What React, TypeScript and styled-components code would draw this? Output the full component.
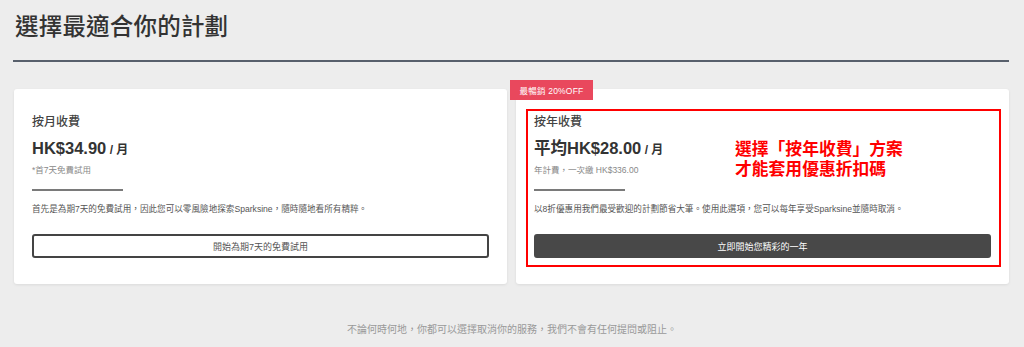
import React from 'react';
import styled, {createGlobalStyle} from "styled-components";

const GlobalStyle = createGlobalStyle`
    body {
        margin: 0;
        background: #ededed;
        font-family: "Liberation Sans", "Noto Sans CJK TC", sans-serif;
        color: #333;
    }
`

type Plan = {
    key: string
    name: string
    prefix?: string
    price: string
    note: string
    desc: string
    action: string
    featured?: boolean
}

const plans: Plan[] = [
    {
        key: "month",
        name: "按月收費",
        price: "HK$34.90",
        note: "*首7天免費試用",
        desc: "首先是為期7天的免費試用，因此您可以零風險地探索Sparksine，隨時隨地看所有精粹。",
        action: "開始為期7天的免費試用",
    },
    {
        key: "year",
        name: "按年收費",
        prefix: "平均",
        price: "HK$28.00",
        note: "年計費，一次繳 HK$336.00",
        desc: "以8折優惠用我們最受歡迎的計劃節省大筆。使用此選項，您可以每年享受Sparksine並隨時取消。",
        action: "立即開始您精彩的一年",
        featured: true,
    },
]

export default function App() {
    return (
        <Page>
            <GlobalStyle/>
            <Header>
                <Title>選擇最適合你的計劃</Title>
            </Header>
            <Cards>
                {plans.map(p => (
                    <Card key={p.key}>
                        {p.featured && <Badge>最暢銷 20%OFF</Badge>}
                        {p.featured && <Highlight/>}
                        {p.featured && (
                            <Callout>
                                <CalloutLine>選擇「按年收費」方案</CalloutLine>
                                <CalloutLine>才能套用優惠折扣碼</CalloutLine>
                            </Callout>
                        )}
                        <PlanName>{p.name}</PlanName>
                        <Price>
                            {p.prefix}{p.price}<Unit> / 月</Unit>
                        </Price>
                        <Note>{p.note}</Note>
                        <Divider/>
                        <Desc>{p.desc}</Desc>
                        <Action $dark={p.featured}>{p.action}</Action>
                    </Card>
                ))}
            </Cards>
            <Footer>不論何時何地，你都可以選擇取消你的服務，我們不會有任何提問或阻止。</Footer>
        </Page>
    );
}

const Page = styled.div`
    width: 1024px;
    height: 347px;
    overflow: hidden;
`

const Header = styled.div`
    margin: 0 15px 0 13px;
    padding: 9px 2px 19px;
    border-bottom: 2px solid #58606c;
`

const Title = styled.h1`
    margin: 0;
    font-family: "Noto Sans CJK TC", sans-serif;
    font-size: 23.5px;
    line-height: 32px;
    font-weight: 500;
    color: #333;
    letter-spacing: 0.2px;
`

const Cards = styled.div`
    display: grid;
    grid-template-columns: 493px 493px;
    gap: 9px;
    margin: 27px 0 0 14px;
`

const Card = styled.div`
    position: relative;
    background: #fff;
    border-radius: 3px;
    box-shadow: 0 1px 3px rgba(0, 0, 0, 0.08);
    height: 195px;
    box-sizing: border-box;
    padding: 25px 18px 0;
    display: flex;
    flex-direction: column;
`

const Badge = styled.div`
    position: absolute;
    left: -6px;
    top: -9px;
    width: 83px;
    height: 20px;
    display: flex;
    align-items: center;
    justify-content: center;
    background: #e9485d;
    color: #fff;
    font-size: 8.5px;
    letter-spacing: 0.2px;
`

const Highlight = styled.div`
    position: absolute;
    left: 10px;
    top: 20px;
    right: 8px;
    bottom: 17px;
    border: 2px solid #ff0000;
    pointer-events: none;
`

const Callout = styled.div`
    position: absolute;
    left: 219px;
    top: 49px;
    color: #ff0000;
    font-family: "Noto Sans CJK TC", sans-serif;
    font-weight: 700;
    font-size: 16.8px;
`

const CalloutLine = styled.div`
    height: 20px;
    line-height: 20px;
    white-space: nowrap;
`

const PlanName = styled.div`
    font-size: 12px;
    line-height: 16px;
    font-weight: 500;
    color: #444;
`

const Price = styled.div`
    margin-top: 7px;
    font-size: 16.5px;
    line-height: 22px;
    font-weight: 700;
    color: #333;
`

const Unit = styled.span`
    font-size: 12px;
`

const Note = styled.div`
    margin-top: 3px;
    font-size: 8.5px;
    line-height: 12px;
    color: #888;
`

const Divider = styled.div`
    margin-top: 13px;
    width: 91px;
    height: 2px;
    background: #7a7a7a;
`

const Desc = styled.div`
    margin-top: 12px;
    font-size: 8.6px;
    line-height: 12px;
    color: #555;
    white-space: nowrap;
`

const Action = styled.div<{ $dark?: boolean }>`
    margin-top: 19px;
    height: 24px;
    box-sizing: border-box;
    display: flex;
    align-items: center;
    justify-content: center;
    border-radius: 3px;
    border: 2px solid ${p => p.$dark ? "#484848" : "#444"};
    background: ${p => p.$dark ? "#484848" : "#fff"};
    color: ${p => p.$dark ? "#fff" : "#555"};
    font-size: 9px;
`

const Footer = styled.div`
    margin-top: 37px;
    text-align: center;
    font-size: 10px;
    color: #999;
`
